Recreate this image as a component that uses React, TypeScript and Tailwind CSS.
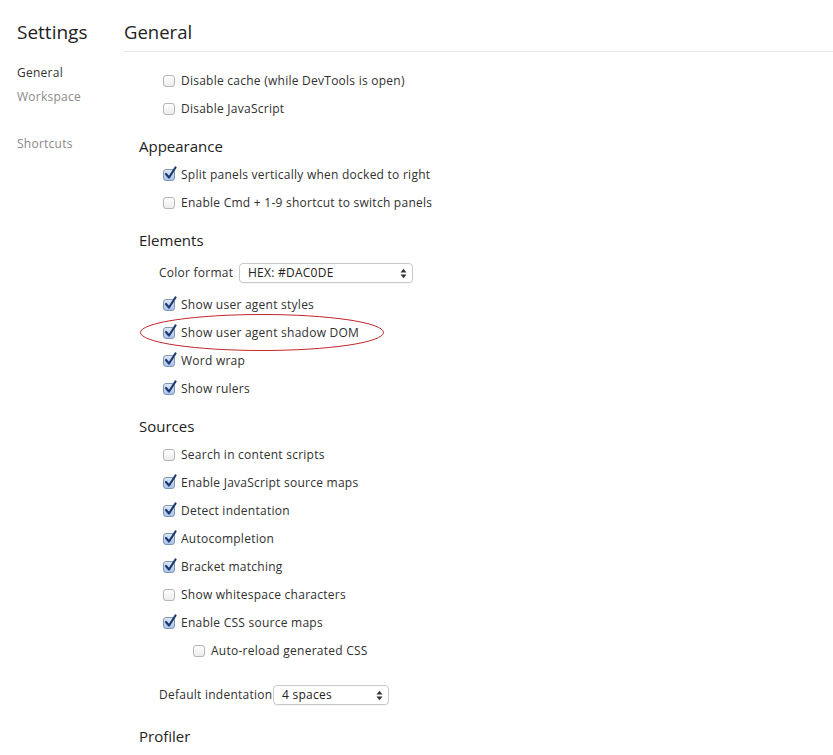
import React from "react";

const font = { fontFamily: '"Open Sans", "DejaVu Sans", sans-serif' };

function Box({ checked }: { checked?: boolean }) {
  return (
    <span className="relative inline-block w-[12px] h-[12px] shrink-0">
      <span
        className={
          checked
            ? "absolute inset-0 rounded-[3px] border border-[#7f96b8] bg-gradient-to-b from-[#dbe7f7] to-[#a9c3e8]"
            : "absolute inset-0 rounded-[3px] border border-[#b4b4b4] bg-gradient-to-b from-white to-[#ececec]"
        }
      />
      {checked && (
        <svg className="absolute left-[1px] top-[-3px]" width="13" height="14" viewBox="0 0 13 14">
          <path d="M2 8 L5 11.5 L11.5 1.5" fill="none" stroke="#1e3a6e" strokeWidth="2.2" strokeLinecap="round" strokeLinejoin="round" />
        </svg>
      )}
    </span>
  );
}

function Row({ label, checked, indent }: { label: string; checked?: boolean; indent?: boolean }) {
  return (
    <div className={`flex items-center h-[28px] pt-[2px] gap-[6px] ${indent ? "pl-[69px]" : "pl-[39px]"}`}>
      <Box checked={checked} />
      <span className="text-[12px] text-[#303030] leading-none tracking-[0.25px]">{label}</span>
    </div>
  );
}

function Header({ title, extra }: { title: string; extra?: string }) {
  return (
    <div className={`flex items-center h-[28px] ${extra ?? "mt-[10px]"} pl-[15px] text-[15px] text-[#222]`}>{title}</div>
  );
}

function Select({ value, width }: { value: string; width: string }) {
  return (
    <div
      className={`flex items-center justify-between h-[20px] ${width} border border-[#c9c9c9] rounded-[4px] bg-white pl-[8px] pr-[5px] text-[12px] text-[#222] tracking-[0.25px] shadow-[0_1px_0_rgba(0,0,0,0.04)]`}
    >
      <span>{value}</span>
      <svg width="7" height="11" viewBox="0 0 7 11">
        <path d="M0.5 4.5 L3.5 0.8 L6.5 4.5 Z" fill="#333" />
        <path d="M0.5 6.5 L3.5 10.2 L6.5 6.5 Z" fill="#333" />
      </svg>
    </div>
  );
}

export default function App() {
  return (
    <div className="w-[833px] h-[755px] bg-white overflow-hidden flex" style={font}>
      <div className="w-[124px] shrink-0 pl-[17px]">
        <div className="h-[51px] flex items-center pt-[13px] text-[19px] text-[#222]">Settings</div>
        <div className="mt-[10px] h-[24px] flex items-center text-[12px] text-[#333] tracking-[0.25px]">General</div>
        <div className="h-[24px] flex items-center text-[12px] text-[#8a8a8a] tracking-[0.25px]">Workspace</div>
        <div className="mt-[23px] h-[24px] flex items-center text-[12px] text-[#8a8a8a] tracking-[0.25px]">Shortcuts</div>
      </div>
      <div className="flex-1">
        <div className="h-[52px] border-b border-[#e6e6e6] flex items-center pt-[13px] text-[18.5px] text-[#222]">General</div>
        <div className="mt-[14px]">
          <Row label="Disable cache (while DevTools is open)" />
          <Row label="Disable JavaScript" />
          <Header title="Appearance" />
          <Row label="Split panels vertically when docked to right" checked />
          <Row label="Enable Cmd + 1-9 shortcut to switch panels" />
          <Header title="Elements" />
          <div className="flex items-center h-[36px] pt-[2px] pl-[35px]">
            <span className="w-[80px] text-[12px] text-[#303030] tracking-[0.25px]">Color format</span>
            <Select value="HEX: #DAC0DE" width="w-[174px]" />
          </div>
          <Row label="Show user agent styles" checked />
          <div className="relative">
            <Row label="Show user agent shadow DOM" checked />
            <svg className="absolute left-[15px] top-[-5px] pointer-events-none" width="246" height="40" viewBox="0 0 246 40">
              <ellipse cx="123" cy="19.5" rx="121.5" ry="18" fill="none" stroke="#c0262b" strokeWidth="1" />
            </svg>
          </div>
          <Row label="Word wrap" checked />
          <Row label="Show rulers" checked />
          <Header title="Sources" />
          <Row label="Search in content scripts" />
          <Row label="Enable JavaScript source maps" checked />
          <Row label="Detect indentation" checked />
          <Row label="Autocompletion" checked />
          <Row label="Bracket matching" checked />
          <Row label="Show whitespace characters" />
          <Row label="Enable CSS source maps" checked />
          <Row label="Auto-reload generated CSS" indent />
          <div className="flex items-center h-[28px] pt-[2px] mt-[16px] pl-[35px]">
            <span className="w-[114px] text-[12px] text-[#303030] tracking-[0.25px]">Default indentation</span>
            <Select value="4 spaces" width="w-[116px]" />
          </div>
          <Header title="Profiler" extra="mt-[13px] pt-[2px]" />
        </div>
      </div>
    </div>
  );
}
